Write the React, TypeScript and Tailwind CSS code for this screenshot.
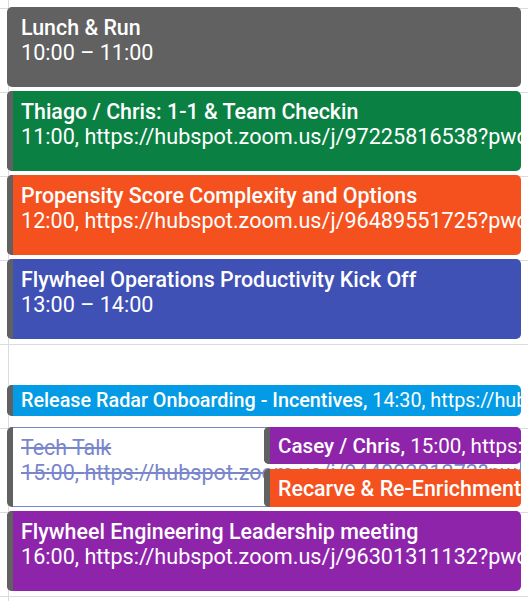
const font = { fontFamily: "Roboto, 'Noto Sans', sans-serif" };

type Ev = {
  title: string;
  sub: string;
  bg: string;
  strip?: boolean;
  h: string;
};

function Strip() {
  return <div className="w-[6px] shrink-0 self-stretch bg-[#616161]" />;
}

function Event({ ev }: { ev: Ev }) {
  return (
    <div className={`flex overflow-hidden rounded-[5px] ${ev.bg} ${ev.h}`}>
      {ev.strip && <Strip />}
      <div className={`min-w-0 flex-1 overflow-hidden text-white ${ev.strip ? "pl-2" : "pl-[14px]"} pt-[8px]`}>
        <div className="whitespace-nowrap text-[21.4px] font-medium leading-[25px]">{ev.title}</div>
        <div className="whitespace-nowrap text-[21.6px] leading-[26px]">{ev.sub}</div>
      </div>
    </div>
  );
}

const zoom = "https://hubspot.zoom.us/j/";

export default function App() {
  const lines = [8, 92, 176, 260, 344, 428, 512, 596];
  return (
    <div className="relative h-[601px] w-[528px] overflow-hidden bg-white" style={font}>
      {/* hour grid */}
      <div className="absolute inset-0">
        <div className="absolute bottom-0 left-[8px] top-0 w-px bg-[#dadce0]" />
        {lines.map((y) => (
          <div key={y} className="absolute left-0 right-0 h-px bg-[#dadce0]" style={{ top: y }} />
        ))}
      </div>

      <div className="relative flex flex-col px-[7px] pt-[7px]">
        <div className="flex flex-col gap-1">
          <Event ev={{ title: "Lunch & Run", sub: "10:00 – 11:00", bg: "bg-[#616161]", h: "h-[80px]" }} />
          <Event
            ev={{
              title: "Thiago / Chris: 1-1 & Team Checkin",
              sub: `11:00, ${zoom}97225816538?pwd=dFJlcUtaQ2xqT`,
              bg: "bg-[#0b8043]",
              strip: true,
              h: "h-[80px]",
            }}
          />
          <Event
            ev={{
              title: "Propensity Score Complexity and Options",
              sub: `12:00, ${zoom}96489551725?pwd=Q0xyMkRjU`,
              bg: "bg-[#f4511e]",
              strip: true,
              h: "h-[80px]",
            }}
          />
          <Event
            ev={{
              title: "Flywheel Operations Productivity Kick Off",
              sub: "13:00 – 14:00",
              bg: "bg-[#3f51b5]",
              strip: true,
              h: "h-[80px]",
            }}
          />
        </div>

        <div className="mt-[46px] flex h-[31px] overflow-hidden rounded-[5px] bg-[#039be5]">
          <Strip />
          <div className="flex min-w-0 flex-1 items-center overflow-hidden whitespace-nowrap pl-2 text-[19.8px] leading-[20px] text-white">
            <span className="font-medium">Release Radar Onboarding - Incentives,</span>&nbsp;14:30, {zoom}9123
          </div>
        </div>

        {/* 15:00 block with overlapping events */}
        <div className="relative mt-[11px] h-[80px]">
          <div className="flex h-full overflow-hidden rounded-[5px] bg-white">
            <div className="w-[6px] shrink-0 bg-[#616161]" />
            <div className="min-w-0 flex-1 overflow-hidden rounded-r-[5px] border border-l-0 border-[#7986cb] pl-2 pt-[7px] text-[#7986cb] line-through">
              <div className="whitespace-nowrap text-[21.4px] leading-[25px]">Tech Talk</div>
              <div className="whitespace-nowrap text-[21.6px] leading-[26px]">15:00, {zoom}94400281273?pwd=T0VHbz</div>
            </div>
          </div>
          <div className="absolute left-[257px] right-0 top-0 h-[37px]">
            <div className="flex h-full overflow-hidden rounded-[5px] bg-[#8e24aa]">
              <Strip />
              <div className="flex min-w-0 flex-1 items-center overflow-hidden whitespace-nowrap pl-2 pt-[2px] text-[20.6px] leading-[21px] text-white">
                <span className="font-medium">Casey / Chris,</span>&nbsp;15:00, {zoom}9
              </div>
            </div>
          </div>
          <div className="absolute bottom-0 left-[257px] right-0 h-[38px]">
            <div className="flex h-full overflow-hidden rounded-[5px] bg-[#f4511e]">
              <Strip />
              <div className="flex min-w-0 flex-1 items-center overflow-hidden whitespace-nowrap pl-2 text-[21.4px] font-medium leading-[21px] text-white">
                Recarve &amp; Re-Enrichment
              </div>
            </div>
          </div>
        </div>

        <div className="mt-1">
          <Event
            ev={{
              title: "Flywheel Engineering Leadership meeting",
              sub: `16:00, ${zoom}96301311132?pwd=cWZzd3`,
              bg: "bg-[#8e24aa]",
              strip: true,
              h: "h-[80px]",
            }}
          />
        </div>
      </div>
    </div>
  );
}
